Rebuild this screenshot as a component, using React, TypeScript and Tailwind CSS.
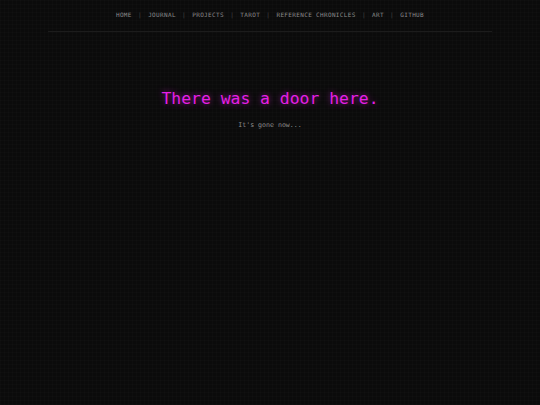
import React from 'react';

const links = ['Home', 'Journal', 'Projects', 'Tarot', 'Reference Chronicles', 'Art', 'GitHub'];

export default function App() {
  return (
    <div
      className="min-h-screen w-full bg-[#0b0b0b] bg-[linear-gradient(rgba(255,255,255,0.012)_1px,transparent_1px),linear-gradient(90deg,rgba(255,255,255,0.012)_1px,transparent_1px)] bg-[size:4px_4px] text-[#888]"
      style={{ fontFamily: '"DejaVu Sans Mono", "Liberation Mono", monospace' }}
    >
      {/* Nav */}
      <nav className="mx-auto w-[444px] border-b border-[#1c1c1c] pt-[11px] pb-[12px]">
        <ul className="flex items-center justify-center text-[6px] leading-[8px] uppercase tracking-[0.35px] text-[#8a8a8a]">
          {links.map((label, i) => (
            <li key={label} className="flex items-center">
              {i > 0 && <span className="px-[6.2px] text-[#444]">|</span>}
              <a href="#" className="hover:text-white">{label}</a>
            </li>
          ))}
        </ul>
      </nav>

      {/* Main */}
      <main className="flex flex-col items-center pt-[57px]">
        <h1 className="text-[16.4px] leading-[20px] text-[#e61fe6] [text-shadow:0_0_6px_rgba(230,31,230,0.6)]">
          There was a door here.
        </h1>
        <p className="mt-[12px] text-[6.6px] leading-[8px] text-[#8c8c8c]">It's gone now...</p>
      </main>
    </div>
  );
}
